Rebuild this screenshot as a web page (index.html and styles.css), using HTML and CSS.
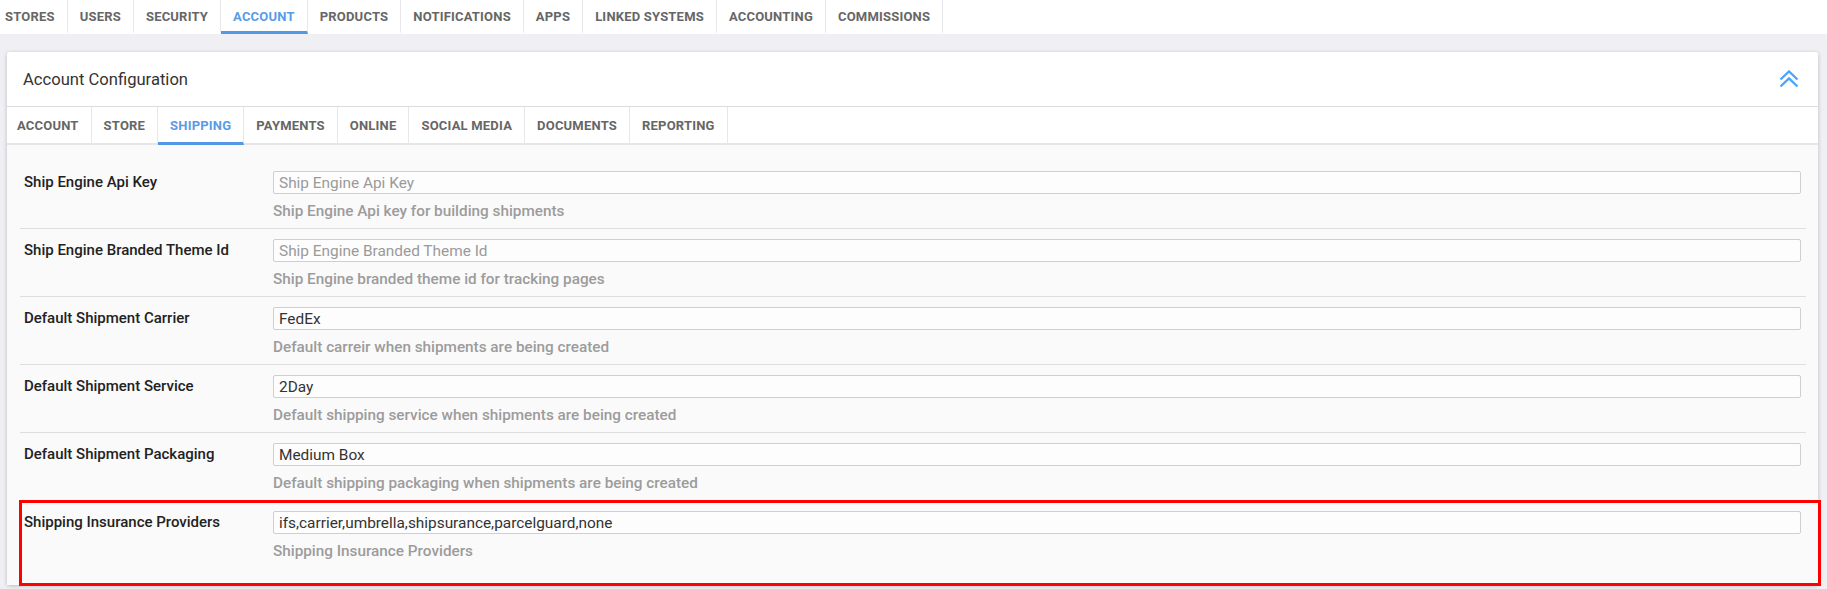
FILE: index.html
```html
<!DOCTYPE html>
<html lang="en">
<head>
    <meta charset="UTF-8">
    <title>Account Configuration</title>
    <link rel="stylesheet" href="styles.css">
</head>
<body>
    <nav class="top-tabs">
        <a href="#" class="tab first">Stores</a>
        <a href="#" class="tab">Users</a>
        <a href="#" class="tab">Security</a>
        <a href="#" class="tab active">Account</a>
        <a href="#" class="tab">Products</a>
        <a href="#" class="tab">Notifications</a>
        <a href="#" class="tab">Apps</a>
        <a href="#" class="tab">Linked Systems</a>
        <a href="#" class="tab">Accounting</a>
        <a href="#" class="tab">Commissions</a>
    </nav>

    <main class="page">
        <section class="panel">
            <header class="panel-header">
                <h2 class="panel-title">Account Configuration</h2>
                <button class="collapse-btn" type="button">
                    <svg width="20" height="19" viewBox="0 0 20 19" fill="none" stroke="#4aa5ff" stroke-width="2.4">
                        <path d="M1.5 9.5 L10 1.5 L18.5 9.5"/>
                        <path d="M1.5 16.5 L10 8.5 L18.5 16.5"/>
                    </svg>
                </button>
            </header>

            <nav class="sub-tabs">
                <a href="#" class="tab">Account</a>
                <a href="#" class="tab">Store</a>
                <a href="#" class="tab active">Shipping</a>
                <a href="#" class="tab">Payments</a>
                <a href="#" class="tab">Online</a>
                <a href="#" class="tab">Social Media</a>
                <a href="#" class="tab">Documents</a>
                <a href="#" class="tab">Reporting</a>
            </nav>

            <div class="panel-body">
                <div class="field-row">
                    <label class="field-label">Ship Engine Api Key</label>
                    <div class="field-control">
                        <input type="text" placeholder="Ship Engine Api Key">
                        <div class="field-help">Ship Engine Api key for building shipments</div>
                    </div>
                </div>
                <div class="field-row">
                    <label class="field-label">Ship Engine Branded Theme Id</label>
                    <div class="field-control">
                        <input type="text" placeholder="Ship Engine Branded Theme Id">
                        <div class="field-help">Ship Engine branded theme id for tracking pages</div>
                    </div>
                </div>
                <div class="field-row">
                    <label class="field-label">Default Shipment Carrier</label>
                    <div class="field-control">
                        <input type="text" value="FedEx">
                        <div class="field-help">Default carreir when shipments are being created</div>
                    </div>
                </div>
                <div class="field-row">
                    <label class="field-label">Default Shipment Service</label>
                    <div class="field-control">
                        <input type="text" value="2Day">
                        <div class="field-help">Default shipping service when shipments are being created</div>
                    </div>
                </div>
                <div class="field-row">
                    <label class="field-label">Default Shipment Packaging</label>
                    <div class="field-control">
                        <input type="text" value="Medium Box">
                        <div class="field-help">Default shipping packaging when shipments are being created</div>
                    </div>
                </div>
                <div class="field-row flagged">
                    <label class="field-label">Shipping Insurance Providers</label>
                    <div class="field-control">
                        <input type="text" value="ifs,carrier,umbrella,shipsurance,parcelguard,none">
                        <div class="field-help">Shipping Insurance Providers</div>
                    </div>
                </div>
            </div>
        </section>
    </main>
</body>
</html>
```

FILE: styles.css
```css
* {
    margin: 0;
    padding: 0;
    box-sizing: border-box;
    font-family: Roboto, 'Liberation Sans', sans-serif;
}

body {
    background: #efeff4;
    overflow: hidden;
    height: 589px;
}

/* tabs, shared by top bar and panel */
.tab {
    display: flex;
    align-items: center;
    padding: 0 12px;
    border-right: 1px solid #e8e8ec;
    border-bottom: 3px solid transparent;
    color: #666;
    font-size: 13px;
    font-weight: 700;
    letter-spacing: 0.2px;
    text-transform: uppercase;
    text-decoration: none;
}

.tab.active {
    color: #5a9be8;
    border-bottom-color: #5596e6;
}

.top-tabs {
    display: flex;
    height: 34px;
    background: #fff;
}

.top-tabs .tab {
    padding-top: 1px;
}

.top-tabs .tab.first {
    padding-left: 5px;
}

.page {
    padding: 18px 9px 0 7px;
}

.panel {
    background: #fff;
    border-radius: 2px;
    box-shadow: 0 1px 4px rgba(0, 0, 0, 0.22);
}

.panel-header {
    display: flex;
    align-items: center;
    justify-content: space-between;
    height: 55px;
    padding: 0 19px 0 16px;
    border-bottom: 1px solid #dcdce0;
}

.panel-title {
    font-size: 16.6px;
    font-weight: 400;
    color: #333;
}

.collapse-btn {
    display: flex;
    background: none;
    border: none;
    cursor: pointer;
}

.sub-tabs {
    display: flex;
    height: 38px;
    border-bottom: 2px solid #e6e6ea;
}

.sub-tabs .tab {
    padding-top: 1px;
    margin-bottom: -2px;
}

.sub-tabs .tab:first-child {
    padding-left: 10px;
}

.panel-body {
    background: #fafafa;
    padding: 16px 12px 17px 13px;
}

.field-row {
    display: flex;
    padding: 10px 5px 8px 4px;
    border-bottom: 1px solid #dedede;
}

.field-row:last-child {
    border-bottom: none;
}

.field-label {
    flex: 0 0 249px;
    line-height: 23px;
    font-size: 15px;
    font-weight: 500;
    color: #222;
}

.field-control {
    flex: 1;
}

.field-control input {
    display: block;
    width: 100%;
    height: 23px;
    padding: 0 5px;
    border: 1px solid #cfcfcf;
    border-radius: 2px;
    background: #fdfdfd;
    font-size: 15.4px;
    color: #333;
    outline: none;
}

.field-control input::placeholder {
    color: #9a9a9a;
}

.field-help {
    margin-top: 8px;
    line-height: 18px;
    font-size: 15.3px;
    font-weight: 500;
    color: #9c9c9c;
}

/* red highlight drawn round the last row */
.field-row.flagged {
    position: relative;
}

.field-row.flagged::after {
    content: '';
    position: absolute;
    top: -1px;
    left: -1px;
    right: -15px;
    bottom: -18px;
    border: 3px solid #f00;
    pointer-events: none;
}
```
